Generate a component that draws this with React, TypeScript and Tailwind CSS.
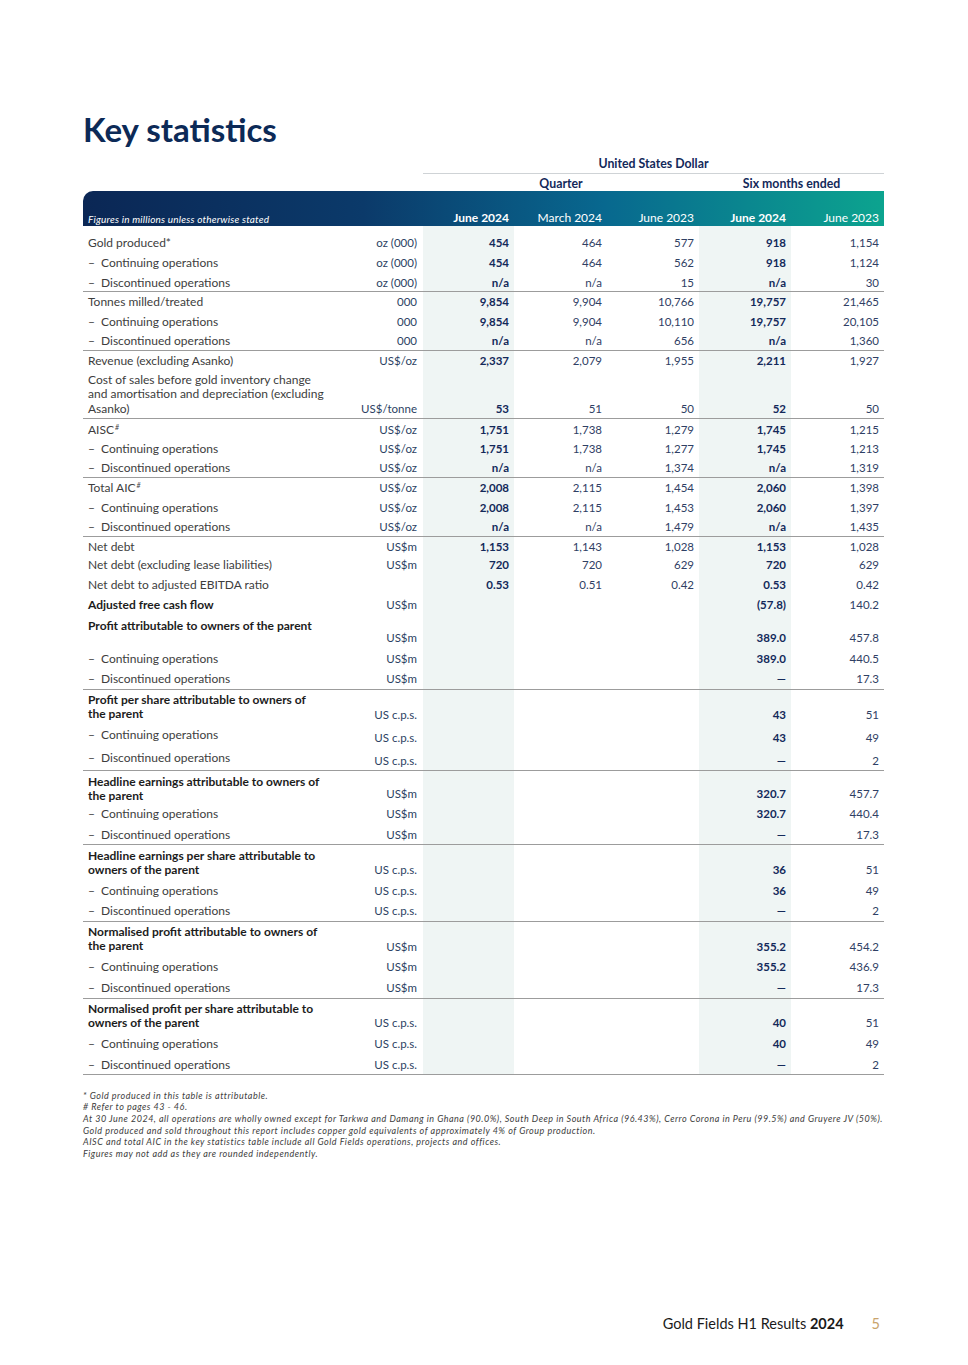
type Row = {
  label: string[];
  sub?: boolean;
  strong?: boolean;
  sup?: string;
  unit?: string;
  v: string[];
  h: string;
  lp: string;
  vp: string;
  line?: boolean;
};

const rows: Row[] = [
  { label: ["Gold produced*"], unit: "oz (000)", v: ["454", "464", "577", "918", "1,154"], h: "h-[27px]", lp: "pt-[9.75px]", vp: "pt-[9.75px]" },
  { label: ["Continuing operations"], sub: true, unit: "oz (000)", v: ["454", "464", "562", "918", "1,124"], h: "h-[20px]", lp: "pt-[2.75px]", vp: "pt-[2.75px]" },
  { label: ["Discontinued operations"], sub: true, unit: "oz (000)", v: ["n/a", "n/a", "15", "n/a", "30"], h: "h-[19px]", lp: "pt-[2.75px]", vp: "pt-[2.75px]", line: true },
  { label: ["Tonnes milled/treated"], unit: "000", v: ["9,854", "9,904", "10,766", "19,757", "21,465"], h: "h-[20px]", lp: "pt-[2.75px]", vp: "pt-[2.75px]" },
  { label: ["Continuing operations"], sub: true, unit: "000", v: ["9,854", "9,904", "10,110", "19,757", "20,105"], h: "h-[19.5px]", lp: "pt-[2.75px]", vp: "pt-[2.75px]" },
  { label: ["Discontinued operations"], sub: true, unit: "000", v: ["n/a", "n/a", "656", "n/a", "1,360"], h: "h-[19.5px]", lp: "pt-[2.25px]", vp: "pt-[2.25px]", line: true },
  { label: ["Revenue (excluding Asanko)"], unit: "US$/oz", v: ["2,337", "2,079", "1,955", "2,211", "1,927"], h: "h-[20px]", lp: "pt-[2.75px]", vp: "pt-[2.75px]" },
  {
    label: ["Cost of sales before gold inventory change", "and amortisation and depreciation (excluding", "Asanko)"],
    unit: "US$/tonne",
    v: ["53", "51", "50", "52", "50"],
    h: "h-[48px]",
    lp: "pt-[1.75px]",
    vp: "pt-[30.75px]",
    line: true,
  },
  { label: ["AISC"], sup: "#", unit: "US$/oz", v: ["1,751", "1,738", "1,279", "1,745", "1,215"], h: "h-[20px]", lp: "pt-[3.75px]", vp: "pt-[3.75px]" },
  { label: ["Continuing operations"], sub: true, unit: "US$/oz", v: ["1,751", "1,738", "1,277", "1,745", "1,213"], h: "h-[19.5px]", lp: "pt-[2.75px]", vp: "pt-[2.75px]" },
  { label: ["Discontinued operations"], sub: true, unit: "US$/oz", v: ["n/a", "n/a", "1,374", "n/a", "1,319"], h: "h-[19.5px]", lp: "pt-[2.25px]", vp: "pt-[2.25px]", line: true },
  { label: ["Total AIC"], sup: "#", unit: "US$/oz", v: ["2,008", "2,115", "1,454", "2,060", "1,398"], h: "h-[20px]", lp: "pt-[2.75px]", vp: "pt-[2.75px]" },
  { label: ["Continuing operations"], sub: true, unit: "US$/oz", v: ["2,008", "2,115", "1,453", "2,060", "1,397"], h: "h-[19.5px]", lp: "pt-[2.75px]", vp: "pt-[2.75px]" },
  { label: ["Discontinued operations"], sub: true, unit: "US$/oz", v: ["n/a", "n/a", "1,479", "n/a", "1,435"], h: "h-[19.5px]", lp: "pt-[2.25px]", vp: "pt-[2.25px]", line: true },
  { label: ["Net debt"], unit: "US$m", v: ["1,153", "1,143", "1,028", "1,153", "1,028"], h: "h-[19px]", lp: "pt-[2.75px]", vp: "pt-[2.75px]" },
  { label: ["Net debt (excluding lease liabilities)"], unit: "US$m", v: ["720", "720", "629", "720", "629"], h: "h-[19px]", lp: "pt-[1.75px]", vp: "pt-[1.75px]" },
  { label: ["Net debt to adjusted EBITDA ratio"], unit: "", v: ["0.53", "0.51", "0.42", "0.53", "0.42"], h: "h-[20px]", lp: "pt-[2.75px]", vp: "pt-[2.75px]" },
  { label: ["Adjusted free cash flow"], strong: true, unit: "US$m", v: ["", "", "", "(57.8)", "140.2"], h: "h-[20px]", lp: "pt-[2.75px]", vp: "pt-[2.75px]" },
  { label: ["Profit attributable to owners of the parent"], strong: true, unit: "US$m", v: ["", "", "", "389.0", "457.8"], h: "h-[33px]", lp: "pt-[3.75px]", vp: "pt-[15.75px]" },
  { label: ["Continuing operations"], sub: true, unit: "US$m", v: ["", "", "", "389.0", "440.5"], h: "h-[21px]", lp: "pt-[3.75px]", vp: "pt-[3.75px]" },
  { label: ["Discontinued operations"], sub: true, unit: "US$m", v: ["", "", "", "—", "17.3"], h: "h-[21px]", lp: "pt-[2.75px]", vp: "pt-[2.75px]", line: true },
  { label: ["Profit per share attributable to owners of", "the parent"], strong: true, unit: "US c.p.s.", v: ["", "", "", "43", "51"], h: "h-[32px]", lp: "pt-[2.75px]", vp: "pt-[17.75px]" },
  { label: ["Continuing operations"], sub: true, unit: "US c.p.s.", v: ["", "", "", "43", "49"], h: "h-[23px]", lp: "pt-[5.75px]", vp: "pt-[8.75px]" },
  { label: ["Discontinued operations"], sub: true, unit: "US c.p.s.", v: ["", "", "", "—", "2"], h: "h-[26px]", lp: "pt-[5.75px]", vp: "pt-[8.75px]", line: true },
  { label: ["Headline earnings attributable to owners of", "the parent"], strong: true, unit: "US$m", v: ["", "", "", "320.7", "457.7"], h: "h-[33px]", lp: "pt-[3.75px]", vp: "pt-[15.75px]" },
  { label: ["Continuing operations"], sub: true, unit: "US$m", v: ["", "", "", "320.7", "440.4"], h: "h-[20px]", lp: "pt-[2.75px]", vp: "pt-[2.75px]" },
  { label: ["Discontinued operations"], sub: true, unit: "US$m", v: ["", "", "", "—", "17.3"], h: "h-[21px]", lp: "pt-[3.75px]", vp: "pt-[3.75px]", line: true },
  { label: ["Headline earnings per share attributable to", "owners of the parent"], strong: true, unit: "US c.p.s.", v: ["", "", "", "36", "51"], h: "h-[35px]", lp: "pt-[3.75px]", vp: "pt-[17.75px]" },
  { label: ["Continuing operations"], sub: true, unit: "US c.p.s.", v: ["", "", "", "36", "49"], h: "h-[21px]", lp: "pt-[3.75px]", vp: "pt-[3.75px]" },
  { label: ["Discontinued operations"], sub: true, unit: "US c.p.s.", v: ["", "", "", "—", "2"], h: "h-[21px]", lp: "pt-[2.75px]", vp: "pt-[2.75px]", line: true },
  { label: ["Normalised profit attributable to owners of", "the parent"], strong: true, unit: "US$m", v: ["", "", "", "355.2", "454.2"], h: "h-[35px]", lp: "pt-[2.75px]", vp: "pt-[17.75px]" },
  { label: ["Continuing operations"], sub: true, unit: "US$m", v: ["", "", "", "355.2", "436.9"], h: "h-[20px]", lp: "pt-[2.75px]", vp: "pt-[2.75px]" },
  { label: ["Discontinued operations"], sub: true, unit: "US$m", v: ["", "", "", "—", "17.3"], h: "h-[22px]", lp: "pt-[3.75px]", vp: "pt-[3.75px]", line: true },
  { label: ["Normalised profit per share attributable to", "owners of the parent"], strong: true, unit: "US c.p.s.", v: ["", "", "", "40", "51"], h: "h-[35px]", lp: "pt-[2.75px]", vp: "pt-[16.75px]" },
  { label: ["Continuing operations"], sub: true, unit: "US c.p.s.", v: ["", "", "", "40", "49"], h: "h-[20px]", lp: "pt-[2.75px]", vp: "pt-[2.75px]" },
  { label: ["Discontinued operations"], sub: true, unit: "US c.p.s.", v: ["", "", "", "—", "2"], h: "h-[21px]", lp: "pt-[3.75px]", vp: "pt-[3.75px]", line: true },
];

const notes = [
  "* Gold produced in this table is attributable.",
  "# Refer to pages 43 - 46.",
  "At 30 June 2024, all operations are wholly owned except for Tarkwa and Damang in Ghana (90.0%), South Deep in South Africa (96.43%), Cerro Corona in Peru (99.5%) and Gruyere JV (50%).",
  "Gold produced and sold throughout this report includes copper gold equivalents of approximately 4% of Group production.",
  "AISC and total AIC in the key statistics table include all Gold Fields operations, projects and offices.",
  "Figures may not add as they are rounded independently.",
];

const grid = "grid grid-cols-[250px_90px_91px_93px_92px_92px_93px]";

export default function App() {
  return (
    <div className="relative flex h-[1365px] w-[968px] flex-col bg-white font-['Lato',sans-serif]">
      <div className="ml-[83px] w-[801px]">
        {/* Title */}
        <h1 className="mt-[109px] text-[33px] font-bold leading-[40px] text-[#0c2a57]">Key statistics</h1>

        {/* Column headers */}
        <div className={`${grid} mt-[7.75px]`}>
          <div className="col-span-2" />
          <div className="col-span-5 h-[17px] border-b border-[#cfd3d6] text-center text-[12.3px] font-bold leading-[14.5px] text-[#13295a]">
            United States Dollar
          </div>
        </div>
        <div className={`${grid} h-[17px] pt-[3px] text-[12.3px] font-bold leading-[14.5px] text-[#13295a]`}>
          <div className="col-span-2" />
          <div className="col-span-3 text-center">Quarter</div>
          <div className="col-span-2 text-center">Six months ended</div>
        </div>
        <div className={`${grid} h-[35px] items-end rounded-tl-[10px] bg-[linear-gradient(90deg,#0b2755_0%,#0b3a6a_35%,#08688f_65%,#0ca48f_100%)] pb-[1px] text-white`}>
          <div className="col-span-2 pl-[5px] text-[10px] italic leading-[12px] tracking-[0.2px]">Figures in millions unless otherwise stated</div>
          <div className="pr-[5px] text-right text-[12px] font-bold leading-[14px]">June 2024</div>
          <div className="pr-[5px] text-right text-[12px] leading-[14px]">March 2024</div>
          <div className="pr-[5px] text-right text-[12px] leading-[14px]">June 2023</div>
          <div className="pr-[5px] text-right text-[12px] font-bold leading-[14px]">June 2024</div>
          <div className="pr-[5px] text-right text-[12px] leading-[14px]">June 2023</div>
        </div>

        {/* Body */}
        <div className="text-[11.5px] leading-[14.5px]">
          {rows.map((r, i) => (
            <div key={i} className={`${grid} ${r.h} ${r.line ? "border-b-[1.5px] border-[#9c9c9c]" : ""}`}>
              <div className={`${r.lp} whitespace-nowrap pl-[5px] text-[12px] ${r.strong ? "font-bold text-[#1c1c1c]" : "text-[#3d3d3d]"}`}>
                {r.label.map((l, j) => (
                  <div key={j}>
                    {r.sub && <span className="inline-block w-[13px]">–</span>}
                    {l}
                    {r.sup && <sup className="ml-[1px] text-[7px] italic">{r.sup}</sup>}
                  </div>
                ))}
              </div>
              <div className={`${r.vp} pr-[6px] text-right text-[#2c3f63]`}>{r.unit}</div>
              {r.v.map((val, k) => (
                <div
                  key={k}
                  className={`${r.vp} pr-[5px] text-right ${
                    k === 0 || k === 3 ? "bg-[#eff5f4] font-bold text-[#13295a]" : "text-[#2f4064]"
                  }`}
                >
                  {val}
                </div>
              ))}
            </div>
          ))}
        </div>

        {/* Footnotes */}
        <div className="mt-[15px] text-[9px] italic leading-[11.6px] tracking-[0.5px] text-[#3d3d3d]">
          {notes.map((n, i) => (
            <p key={i} className="whitespace-nowrap">{n}</p>
          ))}
        </div>
      </div>

      {/* Footer */}
      <div className="mt-auto flex items-baseline justify-end gap-[28px] pb-[33px] pr-[88px] leading-[16px]">
        <span className="text-[14.5px] text-[#1a1a1a]">
          Gold Fields H1 Results <span className="font-bold">2024</span>
        </span>
        <span className="text-[14.5px] text-[#c9a36b]">5</span>
      </div>
    </div>
  );
}
